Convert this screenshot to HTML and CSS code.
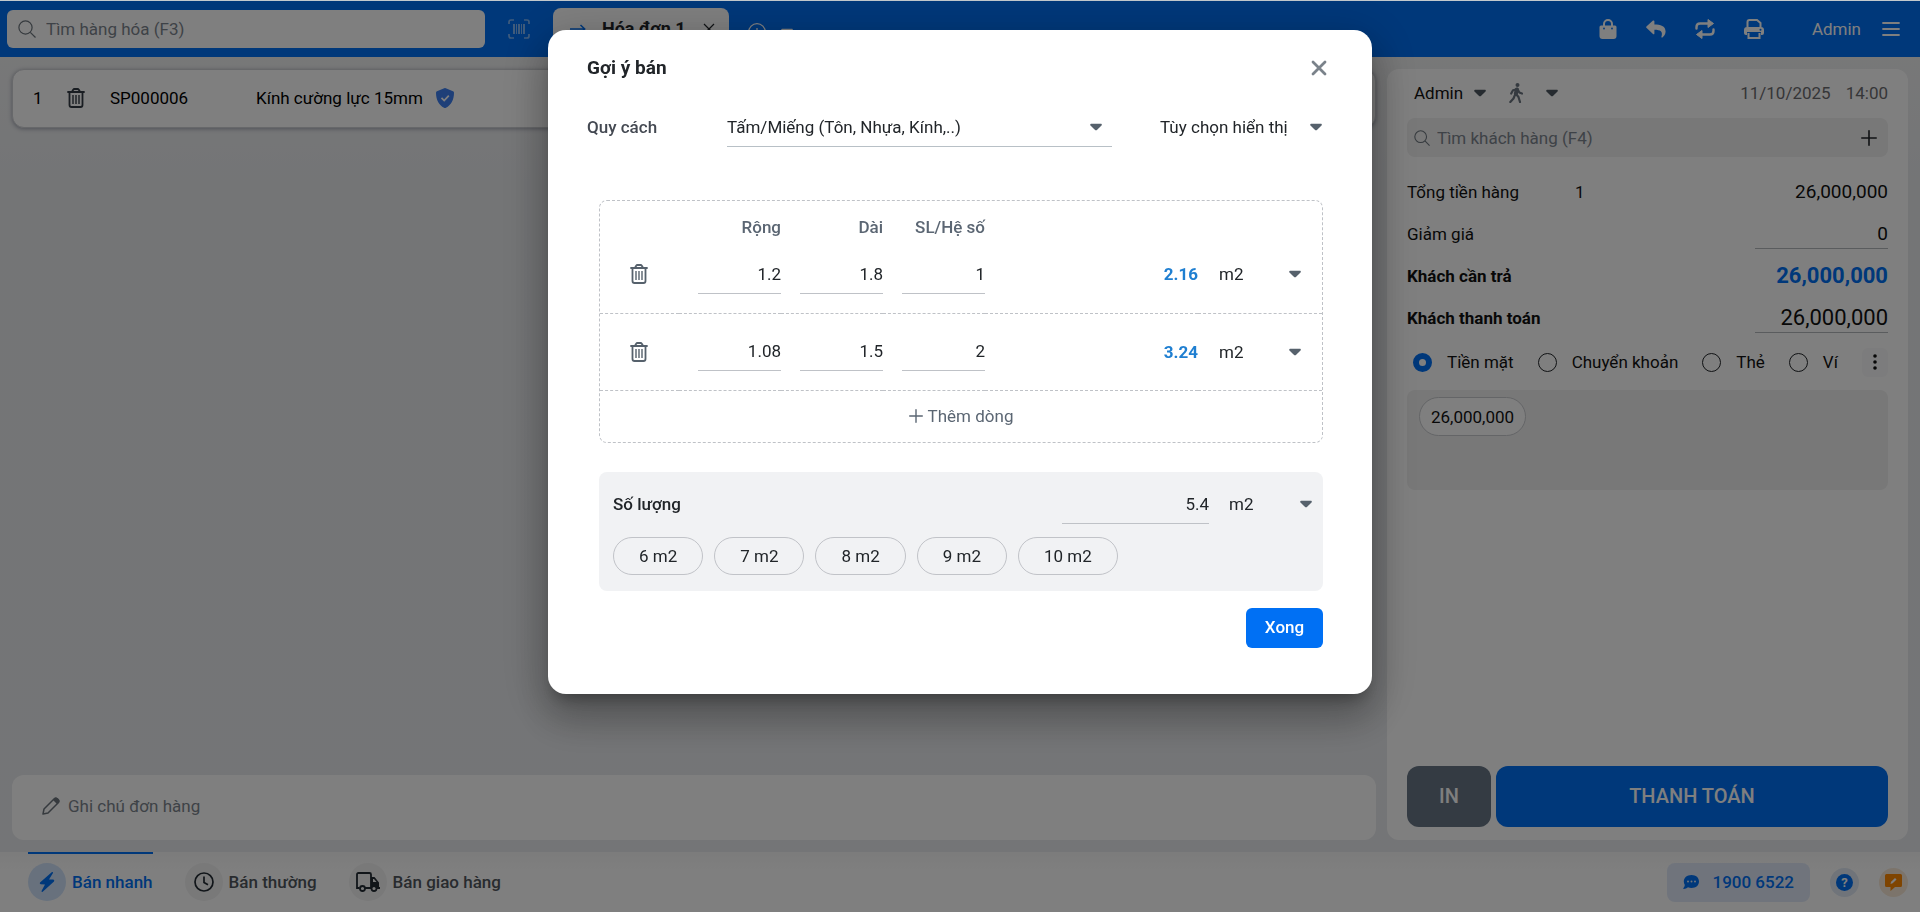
FILE: index.html
```html
<!DOCTYPE html>
<html lang="vi">
  <head>
    <meta charset="utf-8">
    <title>Bán hàng</title>
    <link rel="stylesheet" href="styles.css">
  </head>
  <body>
    <svg class="sprite" aria-hidden="true">
      <symbol id="caret" viewBox="0 0 12 8"><path d="M1.2.8h9.600c1 0 1.300 1 .7 1.700L7.200 6.800c-.7.7-1.700.7-2.400 0L.5 2.500C-.1 1.800.2.8 1.200.8z" fill="currentColor"/></symbol>
      <symbol id="search" viewBox="0 0 18 18"><g fill="none" stroke="currentColor" stroke-width="1.200"><circle cx="7.500" cy="7.500" r="6.600"/><path d="M12.300 12.300l5.200 5.200"/></g></symbol>
      <symbol id="trash" viewBox="0 0 18 20"><g fill="none" stroke="currentColor"><path d="M1 4h16" stroke-width="1.800" stroke-linecap="round"/><path d="M5 3.800l1.200-2.100q.4-.7 1.200-.7h3.200q.8 0 1.200.7L13 3.800M2.500 4v13q0 2 2 2h9q2 0 2-2V4" stroke-width="1.800"/><path d="M6 7v9M9 7v9M12 7v9" stroke-width="1.400"/></g></symbol>
      <symbol id="plus" viewBox="0 0 16 16"><path d="M8 .8v14.400M.8 8h14.400" fill="none" stroke="currentColor" stroke-width="1.600" stroke-linecap="round"/></symbol>
    </svg>

    <header class="topbar">
      <label class="product-search">
        <svg width="18" height="18"><use href="#search"/></svg>
        <input type="text" placeholder="Tìm hàng hóa (F3)" aria-label="Tìm hàng hóa">
      </label>
      <button class="scan" aria-label="Quét mã vạch">
        <svg width="22" height="20" viewBox="0 0 22 20"><path d="M1 5V3q0-2 2-2h3M16 1h3q2 0 2 2v2M21 15v2q0 2-2 2h-3M6 19H3q-2 0-2-2v-2" fill="none" stroke="currentColor" stroke-width="1.700"/><path d="M5 5h2v10H5zM8 5h1v10H8zM10 5h2v10h-2zM13 5h1v10h-1zM15 5h2v10h-2z" fill="currentColor"/></svg>
      </button>
      <div class="invoice-tab">
        <svg class="arrow" width="16" height="10" viewBox="0 0 16 10"><path d="M0 5h14.500M10.500 1l4.200 4-4.200 4" fill="none" stroke="currentColor" stroke-width="1.500"/></svg>
        <span>Hóa đơn 1</span>
        <svg width="12" height="12" viewBox="0 0 12 12"><path d="M1 1l10 10M11 1L1 11" fill="none" stroke="currentColor" stroke-width="1.200"/></svg>
      </div>
      <div class="tab-tools">
        <button aria-label="Thêm hóa đơn">
          <svg width="18" height="18" viewBox="0 0 18 18"><g fill="none" stroke="currentColor" stroke-width="1.300"><circle cx="9" cy="9" r="8.300"/><path d="M9 5v8M5 9h8"/></g></svg>
        </button>
        <svg width="12" height="8"><use href="#caret"/></svg>
      </div>
      <nav class="tools">
        <button aria-label="Đặt hàng">
          <svg width="18" height="20" viewBox="0 0 18 20"><path d="M5 8V5a4 4 0 0 1 8 0v3" fill="none" stroke="currentColor" stroke-width="2"/><path d="M2 6.500h14q1.500 0 1.500 1.500v9q0 3-3 3h-11q-3 0-3-3V8Q.5 6.500 2 6.500z" fill="currentColor"/><circle cx="5" cy="9.500" r=".9" fill="#0070f4"/><circle cx="13" cy="9.500" r=".9" fill="#0070f4"/></svg>
        </button>
        <button aria-label="Trả hàng">
          <svg width="20" height="18" viewBox="0 0 20 18"><path d="M.4 6.400L7 .6c.6-.5 1.400-.1 1.400.7v3.100c6 .1 11.200 1.300 11.200 7.200 0 2.400-1.500 4.700-3.200 5.900-.5.400-1.200-.1-1-.7 1.700-5.400-.8-6.900-7-7v3.600c0 .8-.8 1.200-1.400.7L.4 7.700c-.4-.3-.4-.9 0-1.300z" fill="currentColor"/></svg>
        </button>
        <button aria-label="Đồng bộ">
          <svg width="20" height="20" viewBox="0 0 20 20"><path d="M1.500 9.500V8q0-3.500 3.500-3.500h9M18.500 10.500V12q0 3.500-3.500 3.500H6" fill="none" stroke="currentColor" stroke-width="2.400" stroke-linecap="round"/><path d="M13 .5l5.500 4-5.500 4zM7 11.500l-5.500 4 5.500 4z" fill="currentColor" stroke="currentColor" stroke-linejoin="round"/></svg>
        </button>
        <button aria-label="In">
          <svg width="20" height="20" viewBox="0 0 20 20"><path d="M3.500 8V3q0-2 2-2h7.500l3.500 3v4M4.500 14v5h11v-5" fill="none" stroke="currentColor" stroke-width="2"/><path d="M3 8h14q3 0 3 3v3q0 2-2 2h-1v-3H3v3H2q-2 0-2-2v-3q0-3 3-3z" fill="currentColor"/><circle cx="16.500" cy="10.800" r="1" fill="#0070f4"/></svg>
        </button>
        <a class="account" href="#">Admin</a>
        <button aria-label="Menu">
          <svg width="18" height="16" viewBox="0 0 18 16"><path d="M1 2h16M1 8h16M1 14h16" stroke="currentColor" stroke-width="1.800" stroke-linecap="round"/></svg>
        </button>
      </nav>
    </header>

    <main class="workspace">
      <section class="cart">
        <div class="cart-line">
          <span class="line-no">1</span>
          <button class="line-delete" aria-label="Xóa"><svg width="18" height="20"><use href="#trash"/></svg></button>
          <span class="line-code">SP000006</span>
          <span>Kính cường lực 15mm</span>
          <svg class="shield" width="18" height="20" viewBox="0 0 18 20"><path d="M8.200.3q.8-.4 1.600 0l7.200 3q1 .4 1 1.500c0 7-3 12.500-8 15q-1 .4-2 0C3 17.300 0 11.800 0 4.800q0-1.100 1-1.500z" fill="#3c7ff0"/><path d="M5.500 9.800l2.700 2.700 4.600-4.900" fill="none" stroke="#fff" stroke-width="1.700"/></svg>
        </div>
        <label class="note">
          <svg width="18" height="18" viewBox="0 0 18 18"><path d="M1 17l1-5L12.500 1.500q1.200-1 2.500 0l1.500 1.500q1 1.300 0 2.500L6 16z" fill="none" stroke="currentColor" stroke-width="1.500" stroke-linejoin="round"/><path d="M11 3l2-2q1.500-.8 2.800.4l1 1q1 1.300.2 2.600l-2 2z" fill="currentColor"/></svg>
          <input type="text" placeholder="Ghi chú đơn hàng" aria-label="Ghi chú đơn hàng">
        </label>
      </section>

      <aside class="payment">
        <div class="seller">
          <span>Admin</span>
          <svg width="12" height="8"><use href="#caret"/></svg>
          <svg class="walker" width="14" height="20" viewBox="0 0 14 20"><circle cx="8.500" cy="2" r="2" fill="currentColor"/><path d="M7.800 6.500L6.800 11" fill="none" stroke="currentColor" stroke-width="4" stroke-linecap="round"/><path d="M7 11l2.500 3 1.500 5M5.500 13l-1 2.500L1.300 19M8 6.200L4 7.300l-1.800 3.200M8.500 6l1.800 3.500 2.700 1" fill="none" stroke="currentColor" stroke-width="2.200" stroke-linecap="round" stroke-linejoin="round"/></svg>
          <svg width="12" height="8"><use href="#caret"/></svg>
          <span class="date">11/10/2025</span>
          <span class="time">14:00</span>
        </div>
        <label class="customer-search">
          <svg width="16" height="16"><use href="#search"/></svg>
          <input type="text" placeholder="Tìm khách hàng (F4)" aria-label="Tìm khách hàng">
          <button aria-label="Thêm khách hàng"><svg width="16" height="16"><use href="#plus"/></svg></button>
        </label>
        <div class="totals">
          <div class="total-row"><span class="total-label">Tổng tiền hàng</span><span>1</span><output class="amount">26,000,000</output></div>
          <div class="total-row"><label for="discount">Giảm giá</label><input class="amount" id="discount" type="text" value="0"></div>
          <div class="total-row strong"><span>Khách cần trả</span><output class="amount due">26,000,000</output></div>
          <div class="total-row strong"><label for="paid">Khách thanh toán</label><input class="amount large" id="paid" type="text" value="26,000,000"></div>
        </div>
        <div class="methods">
          <label><input type="radio" name="method" checked>Tiền mặt</label>
          <label><input type="radio" name="method">Chuyển khoản</label>
          <label><input type="radio" name="method">Thẻ</label>
          <label><input type="radio" name="method">Ví</label>
          <button class="more" aria-label="Thêm">
            <svg width="4" height="16" viewBox="0 0 4 16"><g fill="currentColor"><circle cx="2" cy="2" r="1.800"/><circle cx="2" cy="8" r="1.800"/><circle cx="2" cy="14" r="1.800"/></g></svg>
          </button>
        </div>
        <div class="quick-cash"><button class="cash">26,000,000</button></div>
        <div class="actions">
          <button class="print">IN</button>
          <button class="pay">THANH TOÁN</button>
        </div>
      </aside>
    </main>

    <footer class="bottombar">
      <a class="mode active" href="#">
        <span class="mode-icon"><svg width="18" height="22" viewBox="0 0 18 22"><path d="M14 1L2 11.500q-.8 1.300.7 1.700L7 13.500 3.500 20q0 1.300 1.200.8L16 10.500q.9-1.500-.7-1.900L11 8.400 15 2q.3-1.200-1-1z" fill="currentColor"/></svg></span>
        Bán nhanh
      </a>
      <a class="mode" href="#">
        <span class="mode-icon"><svg width="20" height="20" viewBox="0 0 20 20"><g fill="none" stroke="#222b33" stroke-width="1.700"><circle cx="10" cy="10" r="9"/><path d="M10 4.500v6l4 2.300"/></g></svg></span>
        Bán thường
      </a>
      <a class="mode" href="#">
        <span class="mode-icon"><svg width="24" height="20" viewBox="0 0 24 20"><path d="M3.500 16H1V2.500Q1 1 2.500 1h11Q15 1 15 2.500V16H9" fill="none" stroke="#222b33" stroke-width="1.800"/><path d="M15 5h3.500l4.500 5.500V15h1v2h-3.500a3 3 0 0 0-5.500-1.500zM17 7v3h3.500L18 7z" fill="#222b33" fill-rule="evenodd"/><g fill="none" stroke="#222b33" stroke-width="1.800"><circle cx="6.500" cy="16.500" r="2.500"/><circle cx="18" cy="16.500" r="2.500"/></g></svg></span>
        Bán giao hàng
      </a>
      <div class="support">
        <a class="hotline" href="#">
          <svg width="16" height="14" viewBox="0 0 16 14"><path d="M8.500 0C13 0 16 2.800 16 6.500S13 13 8.500 13q-2 0-3.500-.8Q3 14 .5 13.900 0 13.500.5 13 1.700 11.500 1.800 10 .8 8.400.8 6.500C.8 2.800 4 0 8.500 0z" fill="currentColor"/><g fill="#e0e9f9"><circle cx="5" cy="6.500" r="1"/><circle cx="8.500" cy="6.500" r="1"/><circle cx="12" cy="6.500" r="1"/></g></svg>
          1900 6522
        </a>
        <button class="round help" aria-label="Trợ giúp"><span>?</span></button>
        <button class="round feedback" aria-label="Góp ý">
          <svg width="17" height="17" viewBox="0 0 17 17"><path d="M1.500 0h14Q17 0 17 1.500v10q0 1.500-1.500 1.500H10l-4.500 4V13h-4Q0 13 0 11.500v-10Q0 0 1.500 0z" fill="#ff8800"/><path d="M5.500 10l.6-2.200L10 4l1.500 1.500-3.800 3.800z" fill="#fff"/></svg>
        </button>
      </div>
    </footer>

    <div class="overlay">
      <form class="dialog" role="dialog" aria-labelledby="dialogTitle">
        <div class="dialog-head">
          <h2 id="dialogTitle">Gợi ý bán</h2>
          <button type="button" aria-label="Đóng">
            <svg width="16" height="16" viewBox="0 0 16 16"><path d="M2 2l12 12M14 2L2 14" stroke="currentColor" stroke-width="2.800" stroke-linecap="round"/></svg>
          </button>
        </div>

        <div class="spec-row">
          <label for="spec">Quy cách</label>
          <div class="picker underlined">
            <select id="spec"><option>Tấm/Miếng (Tôn, Nhựa, Kính,..)</option></select>
            <svg width="12" height="8"><use href="#caret"/></svg>
          </div>
          <div class="picker display-picker">
            <select aria-label="Tùy chọn hiển thị"><option>Tùy chọn hiển thị</option></select>
            <svg width="12" height="8"><use href="#caret"/></svg>
          </div>
        </div>

        <div class="dialog-body">
          <div class="sizes">
            <table>
              <colgroup>
                <col class="col-delete"><col class="col-size"><col class="col-size"><col class="col-size"><col><col class="col-unit">
              </colgroup>
              <thead>
                <tr><td></td><th>Rộng</th><th>Dài</th><th>SL/Hệ số</th><td></td><td></td></tr>
              </thead>
              <tbody>
                <tr>
                  <td class="delete"><button type="button" aria-label="Xóa dòng"><svg width="18" height="20"><use href="#trash"/></svg></button></td>
                  <td><input type="text" value="1.2" aria-label="Rộng"></td>
                  <td><input type="text" value="1.8" aria-label="Dài"></td>
                  <td><input type="text" value="1" aria-label="SL/Hệ số"></td>
                  <td class="result">2.16</td>
                  <td class="unit">
                    <div class="picker">
                      <select aria-label="Đơn vị"><option>m2</option></select>
                      <svg width="12" height="8"><use href="#caret"/></svg>
                    </div>
                  </td>
                </tr>
                <tr>
                  <td class="delete"><button type="button" aria-label="Xóa dòng"><svg width="18" height="20"><use href="#trash"/></svg></button></td>
                  <td><input type="text" value="1.08" aria-label="Rộng"></td>
                  <td><input type="text" value="1.5" aria-label="Dài"></td>
                  <td><input type="text" value="2" aria-label="SL/Hệ số"></td>
                  <td class="result">3.24</td>
                  <td class="unit">
                    <div class="picker">
                      <select aria-label="Đơn vị"><option>m2</option></select>
                      <svg width="12" height="8"><use href="#caret"/></svg>
                    </div>
                  </td>
                </tr>
              </tbody>
            </table>
            <button type="button" class="add-row"><svg width="14" height="14"><use href="#plus"/></svg>Thêm dòng</button>
          </div>

          <div class="quantity">
            <div class="quantity-row">
              <label for="quantity">Số lượng</label>
              <input id="quantity" type="text" value="5.4">
              <div class="picker">
                <select aria-label="Đơn vị"><option>m2</option></select>
                <svg width="12" height="8"><use href="#caret"/></svg>
              </div>
            </div>
            <div class="chips">
              <button type="button">6 m2</button>
              <button type="button">7 m2</button>
              <button type="button">8 m2</button>
              <button type="button">9 m2</button>
              <button type="button">10 m2</button>
            </div>
          </div>

          <button type="button" class="done">Xong</button>
        </div>
      </form>
    </div>
  </body>
</html>
```
FILE: styles.css
```css
* {
  box-sizing: border-box;
}
body {
  margin: 0;
  height: 100vh;
  display: flex;
  flex-direction: column;
  font-family: Roboto, "Liberation Sans", sans-serif;
  font-size: 17px;
  line-height: 20px;
  color: #212529;
  background: linear-gradient(#f3f3f3, #e8eaed 20%, #e9ebee);
}
button,
input,
select {
  font: inherit;
  color: inherit;
  margin: 0;
  padding: 0;
  border: 0;
  background: none;
}
button {
  display: flex;
  align-items: center;
  justify-content: center;
}
input[type="text"] {
  min-width: 0;
}
input::placeholder {
  color: #7d858e;
  opacity: 1;
}
a {
  color: inherit;
  text-decoration: none;
}
svg {
  display: block;
  flex: none;
}
.sprite {
  display: none;
}

/* top bar */
.topbar {
  display: flex;
  align-items: center;
  height: 57px;
  padding: 0 20px 0 7px;
  background: #0070f4;
  color: #fff;
}
.product-search {
  display: flex;
  align-items: center;
  gap: 10px;
  width: 478px;
  height: 38px;
  padding: 0 11px;
  border-radius: 6px;
  background: #fff;
  color: #6c757d;
}
.product-search input {
  flex: 1;
}
.scan {
  margin-left: 23px;
  opacity: 0.5;
}
.invoice-tab {
  align-self: flex-end;
  display: flex;
  align-items: center;
  width: 176px;
  height: 49px;
  margin: 0 19px 0 23px;
  padding: 0 14px 8px 17px;
  border-radius: 8px 8px 0 0;
  background: #fff;
  color: #212529;
  font-size: 18px;
  font-weight: 700;
}
.invoice-tab span {
  flex: 1;
  margin-left: 16px;
}
.invoice-tab .arrow {
  color: #0070f4;
}
.tab-tools {
  display: flex;
  align-items: center;
  gap: 15px;
  padding-top: 7px;
}
.tools {
  display: flex;
  align-items: center;
  gap: 29px;
  margin-left: auto;
}
.account {
  margin: 0 -8px 0 19px;
}

/* cart and payment */
.workspace {
  flex: 1;
  display: flex;
  gap: 11px;
  padding: 12px;
}
.cart {
  flex: 1;
  display: flex;
  flex-direction: column;
  justify-content: space-between;
}
.cart-line {
  display: flex;
  align-items: center;
  height: 59px;
  padding: 0 20px 1px;
  border: 1px solid #ced0d4;
  border-radius: 12px;
  background: #fff;
  color: #000;
  box-shadow: 0 1px 4px rgba(80, 85, 110, 0.5);
}
.line-no {
  width: 34px;
}
.line-delete {
  margin-right: 25px;
  color: #333b44;
}
.line-code {
  width: 146px;
}
.shield {
  margin-left: 13px;
}
.note {
  display: flex;
  align-items: center;
  gap: 8px;
  height: 65px;
  padding: 0 30px 4px;
  border-radius: 12px;
  background: #fff;
  color: #6c757d;
}
.note input {
  flex: 1;
}
.payment {
  width: 521px;
  display: flex;
  flex-direction: column;
  padding: 0 20px 13px;
  border-radius: 12px;
  background: #fff;
  color: #111;
}
.seller {
  display: flex;
  align-items: center;
  height: 49px;
  padding: 0 0 1px 7px;
}
.seller svg {
  margin-left: 11px;
  color: #4c5761;
}
.seller .walker {
  margin: 0 12px 0 23px;
  color: #6b7580;
}
.date {
  margin: 0 15px 0 auto;
}
.date,
.time {
  color: #6c6c70;
}
.customer-search {
  display: flex;
  align-items: center;
  gap: 7px;
  height: 39px;
  padding: 0 11px 0 7px;
  border-radius: 8px;
  background: #f0f0f0;
  color: #6c757d;
}
.customer-search input {
  flex: 1;
}
.customer-search button {
  color: #212529;
}
.totals {
  margin-top: 14px;
}
.total-row {
  display: flex;
  align-items: center;
  height: 42px;
}
.total-label {
  width: 168px;
}
.amount {
  width: 133px;
  height: 30px;
  line-height: 30px;
  margin-left: auto;
  text-align: right;
  font-size: 19px;
}
input.amount {
  border-bottom: 1px solid #b4b8bd;
}
.strong {
  font-weight: 700;
}
.amount.due {
  font-size: 22px;
  color: #0070f4;
}
.amount.large {
  font-size: 22px;
  font-weight: 400;
}
.methods {
  display: flex;
  align-items: center;
  gap: 24px;
  height: 46px;
  padding-left: 6px;
  white-space: nowrap;
}
.methods label {
  display: flex;
  align-items: center;
  gap: 15px;
}
.methods input {
  appearance: none;
  width: 19px;
  height: 19px;
  border: 1px solid #212529;
  border-radius: 50%;
}
.methods input:checked {
  border: 6px solid #0070f4;
}
.more {
  width: 29px;
  height: 29px;
  margin-left: auto;
  border-radius: 6px;
  background: #f8f9fa;
}
.quick-cash {
  height: 100px;
  margin-top: 5px;
  padding: 7px 12px;
  border-radius: 8px;
  background: #f0f0f0;
}
.cash {
  height: 39px;
  padding: 0 11px;
  border: 1px solid #c8cace;
  border-radius: 20px;
  background: #fff;
}
.actions {
  display: flex;
  gap: 5px;
  height: 61px;
  margin-top: auto;
  font-size: 20px;
  font-weight: 500;
  color: #fff;
}
.actions button {
  padding-bottom: 1px;
  border-radius: 12px;
}
.print {
  width: 84px;
  background: #687686;
}
.pay {
  flex: 1;
  background: #0070f4;
}

/* bottom bar */
.bottombar {
  display: flex;
  height: 60px;
  padding: 0 12px 0 28px;
  gap: 32px;
  background: linear-gradient(#f8f8f8, #fff 20px);
  font-weight: 500;
  color: #50565d;
}
.mode {
  display: flex;
  align-items: center;
  gap: 6px;
  padding-bottom: 3px;
  border-top: 2px solid transparent;
}
.mode.active {
  border-color: #0070f4;
  color: #0070f4;
}
.mode-icon {
  display: flex;
  align-items: center;
  justify-content: center;
  width: 38px;
  height: 38px;
  border-radius: 50%;
  background: #f2f2f3;
}
.active .mode-icon {
  background: #d0e3fb;
}
.support {
  display: flex;
  align-items: center;
  gap: 20px;
  margin-left: auto;
}
.hotline {
  display: flex;
  align-items: center;
  gap: 13px;
  height: 39px;
  padding: 0 16px;
  border-radius: 8px;
  background: #e0e9f9;
  color: #0070f4;
}
.round {
  width: 29px;
  height: 29px;
  border-radius: 50%;
}
.help {
  background: #e0e9f4;
}
.help span {
  width: 17px;
  height: 17px;
  border-radius: 50%;
  background: #0070f4;
  color: #fff;
  font-size: 13px;
  line-height: 17px;
  font-weight: 700;
}
.feedback {
  background: #f8e8d6;
}

/* dialog */
.overlay {
  position: fixed;
  inset: 0;
  display: flex;
  align-items: flex-start;
  justify-content: center;
  padding-top: 29px;
  border-top: 1px solid #c3c9cd;
  background: rgba(0, 0, 0, 0.5);
}
.dialog {
  width: 824px;
  max-width: 100%;
  padding-bottom: 46px;
  border-radius: 18px;
  background: #fff;
  box-shadow: 0 11px 15px -7px rgba(0, 0, 0, 0.3),
    0 24px 38px 3px rgba(0, 0, 0, 0.2),
    0 9px 46px 8px rgba(0, 0, 0, 0.16);
}
.dialog-head {
  display: flex;
  align-items: center;
  justify-content: space-between;
  height: 76px;
  padding: 0 45px 0 39px;
}
.dialog-head h2 {
  margin: 0;
  font-size: 19px;
  font-weight: 700;
}
.dialog-head button {
  color: #7a828a;
}
.spec-row {
  display: flex;
  align-items: center;
  padding: 0 49px 0 39px;
}
.spec-row label {
  width: 140px;
  font-weight: 500;
  color: #444952;
}
.picker {
  display: grid;
  align-items: center;
  height: 39px;
}
.picker select,
.picker svg {
  grid-area: 1 / 1;
}
.picker select {
  appearance: none;
  width: 100%;
}
.picker svg {
  justify-self: end;
  margin-right: 1px;
  color: #56616c;
  pointer-events: none;
}
.underlined {
  width: 385px;
  height: 41px;
  padding-top: 1px;
  border-bottom: 1px solid #b8c0c6;
}
.underlined svg {
  margin-right: 10px;
}
.display-picker {
  flex: 1;
  margin-left: 48px;
}
.dialog-body {
  padding: 53px 49px 0 51px;
}
.sizes {
  border: 1px dashed #bfc2c7;
  border-radius: 8px;
}
.sizes table {
  width: 100%;
  table-layout: fixed;
  border-collapse: collapse;
}
.sizes th,
.sizes td {
  padding: 0;
}
.sizes th {
  height: 35px;
  text-align: right;
  vertical-align: bottom;
  line-height: 17px;
  font-weight: 500;
  color: #5b6673;
}
.sizes tbody tr {
  border-bottom: 1px dashed #bfc2c7;
}
.sizes tbody td {
  height: 77px;
}
.col-delete {
  width: 79px;
}
.col-size {
  width: 102px;
}
.col-unit {
  width: 124px;
}
.sizes input,
.quantity input {
  height: 39px;
  border-bottom: 1px solid #bfc2c7;
  text-align: right;
}
.sizes input {
  display: block;
  width: 83px;
  margin-left: auto;
}
.delete button {
  margin: 0 auto;
  padding-right: 2px;
  color: #56616c;
}
.result {
  text-align: right;
  font-weight: 700;
  color: #1f7fd1;
}
.sizes .unit {
  padding: 0 20px 0 21px;
}
.add-row {
  width: 100%;
  height: 51px;
  gap: 5px;
  padding-bottom: 1px;
  color: #5b6673;
}
.quantity {
  margin-top: 29px;
  padding: 13px 10px 16px 14px;
  border-radius: 8px;
  background: #f1f2f4;
}
.quantity-row {
  display: flex;
  align-items: center;
}
.quantity-row label {
  flex: 1;
  font-weight: 500;
}
.quantity input {
  width: 147px;
}
.quantity .picker {
  width: 84px;
  margin-left: 20px;
}
.chips {
  display: flex;
  gap: 11px;
  margin-top: 13px;
}
.chips button {
  height: 38px;
  padding: 0 25px;
  border: 1px solid #c1c3c8;
  border-radius: 19px;
}
.done {
  width: 77px;
  height: 40px;
  margin: 17px 0 0 auto;
  padding-bottom: 2px;
  border-radius: 6px;
  background: #0070f4;
  color: #fff;
  font-weight: 500;
}
```
